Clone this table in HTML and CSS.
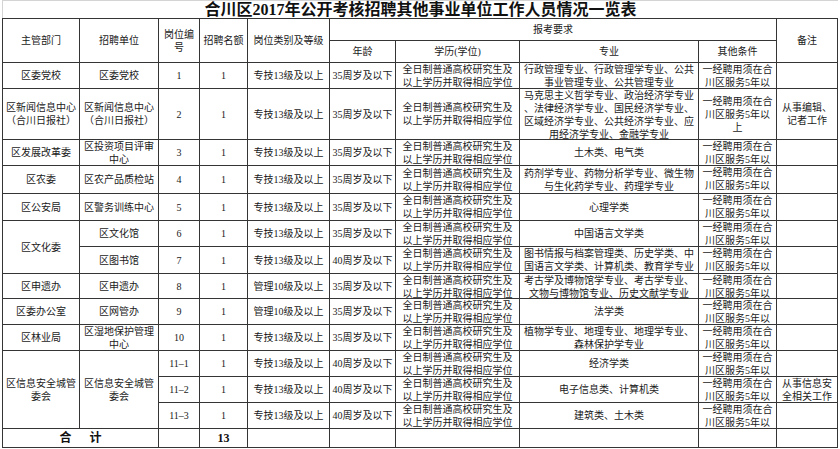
FILE: index.html
```html
<!DOCTYPE html>
<html lang="zh-CN">
<head>
<meta charset="utf-8">
<title>合川区2017年公开考核招聘其他事业单位工作人员情况一览表</title>
<link rel="stylesheet" href="styles.css">
</head>
<body>
<div class="sheet">
  <div class="title">合川区2017年公开考核招聘其他事业单位工作人员情况一览表</div>
  <div class="grid">
    <div class="c r2">主管部门</div>
    <div class="c r2">招聘单位</div>
    <div class="c r2">岗位编号</div>
    <div class="c r2">招聘名额</div>
    <div class="c r2">岗位类别及等级</div>
    <div class="c s4">报考要求</div>
    <div class="c r2">备注</div>
    <div class="c">年龄</div>
    <div class="c">学历(学位)</div>
    <div class="c">专业</div>
    <div class="c">其他条件</div>

    <div class="c">区委党校</div>
    <div class="c">区委党校</div>
    <div class="c">1</div>
    <div class="c">1</div>
    <div class="c">专技13级及以上</div>
    <div class="c">35周岁及以下</div>
    <div class="c">全日制普通高校研究生及以上学历并取得相应学位</div>
    <div class="c">行政管理专业、行政管理学专业、公共事业管理专业、公共管理专业</div>
    <div class="c">一经聘用须在合川区服务5年以上</div>
    <div class="c"></div>

    <div class="c">区新闻信息中心（合川日报社）</div>
    <div class="c">区新闻信息中心（合川日报社）</div>
    <div class="c">2</div>
    <div class="c">1</div>
    <div class="c">专技13级及以上</div>
    <div class="c">35周岁及以下</div>
    <div class="c">全日制普通高校研究生及以上学历并取得相应学位</div>
    <div class="c">马克思主义哲学专业、政治经济学专业、法律经济学专业、国民经济学专业、区域经济学专业、公共经济学专业、应用经济学专业、金融学专业</div>
    <div class="c">一经聘用须在合川区服务5年以上</div>
    <div class="c">从事编辑、记者工作</div>

    <div class="c">区发展改革委</div>
    <div class="c">区投资项目评审中心</div>
    <div class="c">3</div>
    <div class="c">1</div>
    <div class="c">专技13级及以上</div>
    <div class="c">35周岁及以下</div>
    <div class="c">全日制普通高校研究生及以上学历并取得相应学位</div>
    <div class="c">土木类、电气类</div>
    <div class="c">一经聘用须在合川区服务5年以上</div>
    <div class="c"></div>

    <div class="c">区农委</div>
    <div class="c">区农产品质检站</div>
    <div class="c">4</div>
    <div class="c">1</div>
    <div class="c">专技13级及以上</div>
    <div class="c">35周岁及以下</div>
    <div class="c">全日制普通高校研究生及以上学历并取得相应学位</div>
    <div class="c">药剂学专业、药物分析学专业、微生物与生化药学专业、药理学专业</div>
    <div class="c">一经聘用须在合川区服务5年以上</div>
    <div class="c"></div>

    <div class="c">区公安局</div>
    <div class="c">区警务训练中心</div>
    <div class="c">5</div>
    <div class="c">1</div>
    <div class="c">专技13级及以上</div>
    <div class="c">35周岁及以下</div>
    <div class="c">全日制普通高校研究生及以上学历并取得相应学位</div>
    <div class="c">心理学类</div>
    <div class="c">一经聘用须在合川区服务5年以上</div>
    <div class="c"></div>

    <div class="c r2">区文化委</div>
    <div class="c">区文化馆</div>
    <div class="c">6</div>
    <div class="c">1</div>
    <div class="c">专技13级及以上</div>
    <div class="c">35周岁及以下</div>
    <div class="c">全日制普通高校研究生及以上学历并取得相应学位</div>
    <div class="c">中国语言文学类</div>
    <div class="c">一经聘用须在合川区服务5年以上</div>
    <div class="c"></div>

    <div class="c">区图书馆</div>
    <div class="c">7</div>
    <div class="c">1</div>
    <div class="c">专技13级及以上</div>
    <div class="c">40周岁及以下</div>
    <div class="c">全日制普通高校研究生及以上学历并取得相应学位</div>
    <div class="c">图书情报与档案管理类、历史学类、中国语言文学类、计算机类、教育学专业</div>
    <div class="c">一经聘用须在合川区服务5年以上</div>
    <div class="c"></div>

    <div class="c">区申遗办</div>
    <div class="c">区申遗办</div>
    <div class="c">8</div>
    <div class="c">1</div>
    <div class="c">管理10级及以上</div>
    <div class="c">35周岁及以下</div>
    <div class="c">全日制普通高校研究生及以上学历并取得相应学位</div>
    <div class="c">考古学及博物馆学专业、考古学专业、文物与博物馆专业、历史文献学专业</div>
    <div class="c">一经聘用须在合川区服务5年以上</div>
    <div class="c"></div>

    <div class="c">区委办公室</div>
    <div class="c">区网管办</div>
    <div class="c">9</div>
    <div class="c">1</div>
    <div class="c">管理10级及以上</div>
    <div class="c">35周岁及以下</div>
    <div class="c">全日制普通高校研究生及以上学历并取得相应学位</div>
    <div class="c">法学类</div>
    <div class="c">一经聘用须在合川区服务5年以上</div>
    <div class="c"></div>

    <div class="c">区林业局</div>
    <div class="c">区湿地保护管理中心</div>
    <div class="c">10</div>
    <div class="c">1</div>
    <div class="c">专技13级及以上</div>
    <div class="c">35周岁及以下</div>
    <div class="c">全日制普通高校研究生及以上学历并取得相应学位</div>
    <div class="c">植物学专业、地理专业、地理学专业、森林保护学专业</div>
    <div class="c">一经聘用须在合川区服务5年以上</div>
    <div class="c"></div>

    <div class="c r3">区信息安全城管委会</div>
    <div class="c r3">区信息安全城管委会</div>
    <div class="c">11–1</div>
    <div class="c">1</div>
    <div class="c">专技13级及以上</div>
    <div class="c">40周岁及以下</div>
    <div class="c">全日制普通高校研究生及以上学历并取得相应学位</div>
    <div class="c">经济学类</div>
    <div class="c">一经聘用须在合川区服务5年以上</div>
    <div class="c"></div>

    <div class="c">11–2</div>
    <div class="c">1</div>
    <div class="c">专技13级及以上</div>
    <div class="c">40周岁及以下</div>
    <div class="c">全日制普通高校研究生及以上学历并取得相应学位</div>
    <div class="c">电子信息类、计算机类</div>
    <div class="c">一经聘用须在合川区服务5年以上</div>
    <div class="c">从事信息安全相关工作</div>

    <div class="c">11–3</div>
    <div class="c">1</div>
    <div class="c">专技13级及以上</div>
    <div class="c">40周岁及以下</div>
    <div class="c">全日制普通高校研究生及以上学历并取得相应学位</div>
    <div class="c">建筑类、土木类</div>
    <div class="c">一经聘用须在合川区服务5年以上</div>
    <div class="c"></div>

    <div class="c s2 total"><span>合</span><span>计</span></div>
    <div class="c"></div>
    <div class="c total">13</div>
    <div class="c"></div>
    <div class="c"></div>
    <div class="c"></div>
    <div class="c"></div>
    <div class="c"></div>
    <div class="c"></div>
  </div>
</div>
</body>
</html>
```

FILE: styles.css
```css
html, body {
  margin: 0;
  padding: 0;
  background: #ffffff;
}

body {
  font-family: "Liberation Serif", "Noto Sans CJK SC", serif;
  color: #1a1a1a;
}

.sheet {
  padding-left: 2px;
  width: 836px;
}

.title {
  height: 18px;
  box-sizing: border-box;
  border-top: 1px solid #d4d4d4;
  border-left: 1px solid #d4d4d4;
  font-size: 16px;
  font-weight: bold;
  line-height: 17px;
  text-align: center;
  color: #111;
  white-space: nowrap;
}

.grid {
  display: grid;
  grid-template-columns: 76px 78px 40px 47px 81px 65px 123px 178px 77px 60px;
  grid-template-rows: 21px 21px 25px 50px 25px 27px 26px 25px 26px 24px 25px 25px 25px 25px 25px 18px;
  gap: 1px;
  padding: 1px;
  background: #353535;
  width: 836px;
  box-sizing: border-box;
}

.c {
  background: #ffffff;
  overflow: hidden;
  display: flex;
  align-items: safe center;
  justify-content: center;
  text-align: center;
  padding: 0 2px;
  font-size: 10px;
  line-height: 13px;
  line-break: anywhere;
  min-width: 0;
  min-height: 0;
}

.r2 { grid-row: span 2; }
.r3 { grid-row: span 3; }
.s2 { grid-column: span 2; }
.s4 { grid-column: span 4; }

.total {
  font-weight: bold;
  font-size: 12px;
  gap: 18px;
  color: #111;
}
```
